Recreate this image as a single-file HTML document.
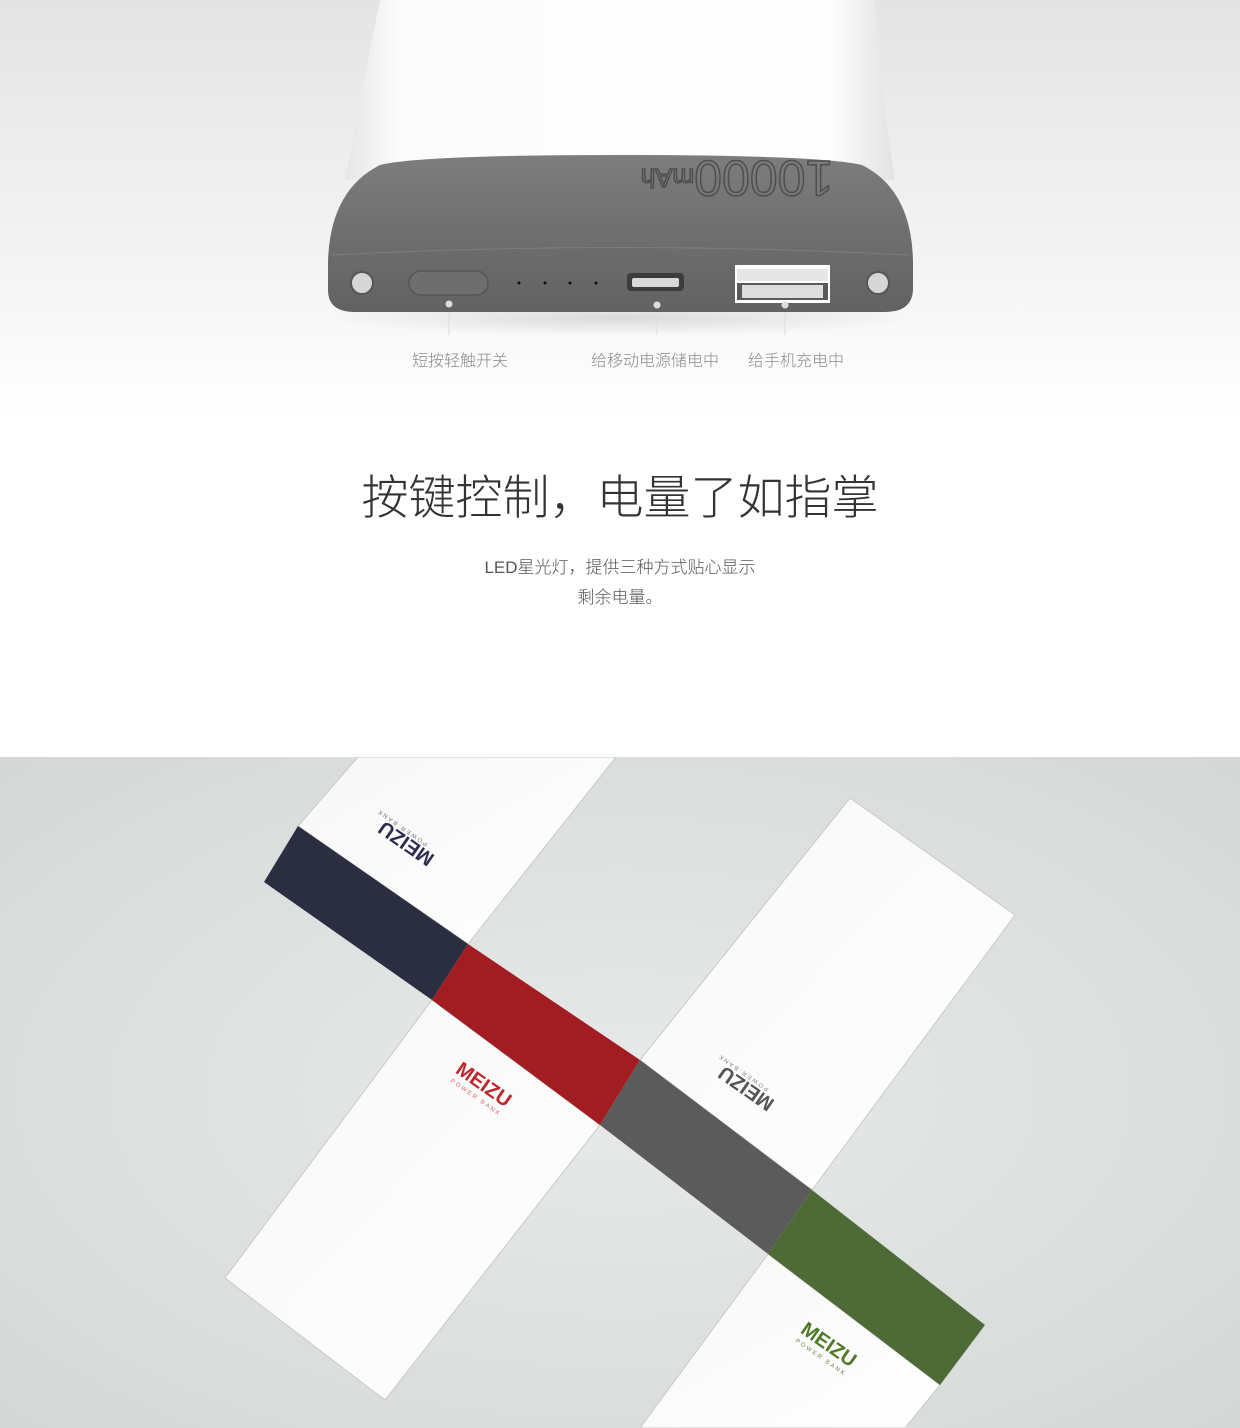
<!DOCTYPE html>
<html><head><meta charset="utf-8"><style>
html,body{margin:0;padding:0}
body{width:1240px;height:1428px;position:relative;overflow:hidden;background:#fff;font-family:"Liberation Sans","Noto Sans CJK SC",sans-serif}
.top{position:absolute;left:0;top:0;width:1240px;height:757px;background:linear-gradient(#e4e4e4 0px,#f3f3f3 250px,#fff 420px,#fff 757px)}
.lbl{position:absolute;top:347px;font-size:16px;color:#8a8a8a;white-space:nowrap;font-weight:300}
h1{position:absolute;left:0;width:1240px;top:459px;margin:0;text-align:center;font-size:47px;font-weight:300;color:#333;letter-spacing:0px}
.sub{position:absolute;left:0;width:1240px;top:553px;text-align:center;font-size:17px;line-height:30px;color:#555;font-weight:300}
</style></head><body>
<div class="top"></div>
<svg style="position:absolute;left:0;top:0" width="1240" height="420">
<defs>
<linearGradient id="wb" x1="0" x2="1"><stop offset="0" stop-color="#e6e6e6"/><stop offset="0.1" stop-color="#fcfcfc"/><stop offset="0.88" stop-color="#fefefe"/><stop offset="1" stop-color="#e2e2e2"/></linearGradient>
<linearGradient id="cap" x1="0" y1="0" x2="0" y2="1"><stop offset="0" stop-color="#7d7d7d"/><stop offset="0.6" stop-color="#6c6c6c"/><stop offset="1" stop-color="#626262"/></linearGradient>
<radialGradient id="sh" cx="0.5" cy="0.5" r="0.5"><stop offset="0" stop-color="#000" stop-opacity="0.12"/><stop offset="1" stop-color="#000" stop-opacity="0"/></radialGradient>
</defs>
<path d="M380 0 L875 0 Q882 100 895 180 L345 180 Q360 100 380 0Z" fill="url(#wb)"/>
<ellipse cx="620" cy="318" rx="300" ry="18" fill="url(#sh)"/>
<path d="M328 262 Q330 190 380 165 Q420 155 620 155 Q820 155 862 165 Q912 190 913 262 L913 290 Q912 312 885 312 L355 312 Q328 312 328 290Z" fill="url(#cap)"/>
<path d="M332 255 Q620 240 910 255" stroke="#888" stroke-width="1" fill="none" opacity="0.6"/>
<text x="737" y="178" transform="rotate(180 737 178)" dominant-baseline="central" font-family="Liberation Sans,sans-serif" font-size="50" font-weight="300" fill="none" stroke="#4e4e4e" stroke-width="1.5" text-anchor="middle">10000<tspan font-size="26">mAh</tspan></text>
<circle cx="362" cy="283" r="11" fill="#d6d6d6" stroke="#555" stroke-width="2"/>
<circle cx="878" cy="283" r="11" fill="#d6d6d6" stroke="#555" stroke-width="2"/>
<rect x="409" y="271" width="79" height="24" rx="12" fill="#6e6e6e" stroke="#555" stroke-width="1.5"/>
<circle cx="519" cy="283" r="1.5" fill="#111"/><circle cx="545" cy="283" r="1.5" fill="#111"/><circle cx="570" cy="283" r="1.5" fill="#111"/><circle cx="596" cy="283" r="1.5" fill="#111"/>
<rect x="627" y="273" width="57" height="18" rx="4" fill="#3c3c3c"/><rect x="632" y="278" width="47" height="9" rx="2" fill="#d8d8d8"/>
<rect x="735" y="265" width="95" height="38" fill="#fff"/><rect x="737" y="269" width="91" height="12" fill="#e6e6e6"/><rect x="737" y="283" width="91" height="17" fill="#5a5a5a"/><rect x="742" y="285" width="81" height="13" fill="#ddd"/>
<circle cx="449" cy="304" r="3.5" fill="#ddd"/><circle cx="657" cy="305" r="3.5" fill="#ddd"/><circle cx="785" cy="305" r="3.5" fill="#ddd"/>
<line x1="449" y1="312" x2="449" y2="335" stroke="#ddd"/><line x1="657" y1="312" x2="657" y2="335" stroke="#ddd"/><line x1="785" y1="312" x2="785" y2="335" stroke="#ddd"/>
</svg>
<div class="lbl" style="left:412px">短按轻触开关</div>
<div class="lbl" style="left:591px">给移动电源储电中</div>
<div class="lbl" style="left:748px">给手机充电中</div>
<h1>按键控制，电量了如指掌</h1>
<div class="sub">LED星光灯，提供三种方式贴心显示<br>剩余电量。</div>
<svg style="position:absolute;left:0;top:757px" width="1240" height="671" viewBox="0 757 1240 671">
<defs>
<radialGradient id="bg" cx="0.5" cy="0.5" r="0.7"><stop offset="0" stop-color="#e8eae9"/><stop offset="1" stop-color="#d6d8d7"/></radialGradient>
<linearGradient id="wh" x1="0" y1="0" x2="1" y2="1"><stop offset="0" stop-color="#f6f7f6"/><stop offset="1" stop-color="#ffffff"/></linearGradient>
</defs>
<rect x="0" y="757" width="1240" height="671" fill="url(#bg)"/>
<polygon points="358,757 616,757 468,944 298,826" fill="url(#wh)" stroke="#c8cac9"/>
<polygon points="298,826 468,944 432,1000 264,882" fill="#2b2e40"/>
<polygon points="432,1000 600,1125 385,1400 225,1278" fill="url(#wh)" stroke="#c8cac9"/>
<polygon points="468,944 640,1060 600,1125 432,1000" fill="#a21d22"/>
<polygon points="640,1060 850,798 1015,915 812,1190" fill="url(#wh)" stroke="#c8cac9"/>
<polygon points="640,1060 812,1190 768,1254 600,1125" fill="#5b5b5b"/>
<polygon points="768,1254 940,1385 905,1428 640,1428" fill="url(#wh)" stroke="#c8cac9"/>
<polygon points="812,1190 985,1325 940,1385 768,1254" fill="#4e6b37"/>
<g font-family="Liberation Sans,sans-serif" text-anchor="middle">
<text x="410" y="838" transform="rotate(215 410 838)" font-size="20" font-weight="bold" fill="#2b2e50">MEIZU</text>
<text x="403" y="826" transform="rotate(215 403 826)" font-size="6" fill="#777" letter-spacing="2">POWER BANK</text>
<text x="480" y="1090" transform="rotate(35 480 1090)" font-size="20" font-weight="bold" fill="#c0272d">MEIZU</text>
<text x="475" y="1099" transform="rotate(35 475 1099)" font-size="6" fill="#d66" letter-spacing="2">POWER BANK</text>
<text x="750" y="1083" transform="rotate(215 750 1083)" font-size="20" font-weight="bold" fill="#555">MEIZU</text>
<text x="744" y="1071" transform="rotate(215 744 1071)" font-size="6" fill="#888" letter-spacing="2">POWER BANK</text>
<text x="825" y="1350" transform="rotate(35 825 1350)" font-size="20" font-weight="bold" fill="#4e7a2a">MEIZU</text>
<text x="820" y="1359" transform="rotate(35 820 1359)" font-size="6" fill="#6a8a4a" letter-spacing="2">POWER BANK</text>
</g>
</svg>
</body></html>
